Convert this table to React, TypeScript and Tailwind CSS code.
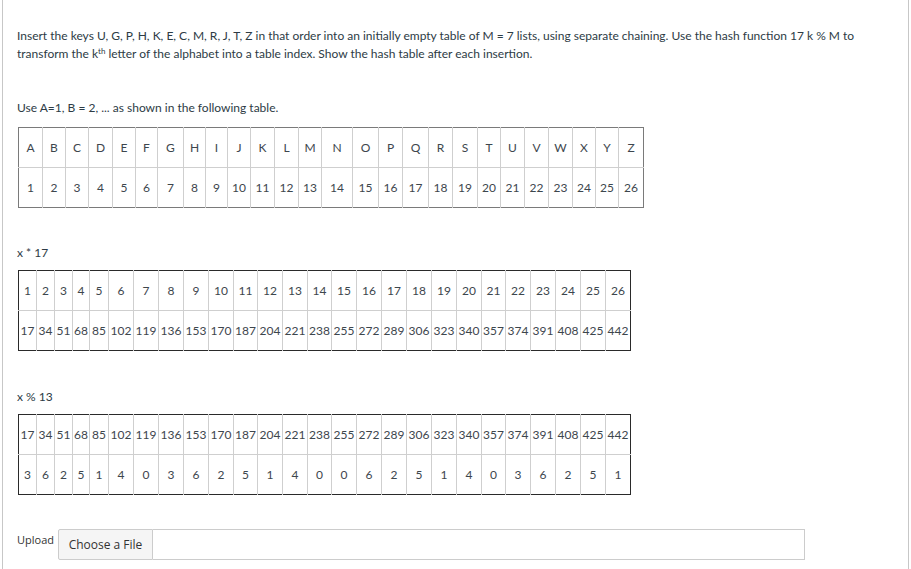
import React from "react";

const letters = "ABCDEFGHIJKLMNOPQRSTUVWXYZ".split("");
const nums = letters.map((_, i) => i + 1);
const times17 = nums.map((n) => n * 17);
// values as given in the assignment
const mod = [3, 6, 2, 5, 1, 4, 0, 3, 6, 2, 5, 1, 4, 0, 0, 6, 2, 5, 1, 4, 0, 3, 6, 2, 5, 1];

// measured column widths from the reference
const alphaCols = [
  "w-[24px]", "w-[23px]", "w-[23px]", "w-[24px]", "w-[23px]", "w-[22px]",
  "w-[26px]", "w-[22px]", "w-[22px]", "w-[23px]", "w-[24px]", "w-[24px]",
  "w-[23px]", "w-[31px]", "w-[26px]", "w-[24px]", "w-[26px]", "w-[24px]",
  "w-[25px]", "w-[23px]", "w-[24px]", "w-[24px]", "w-[24px]", "w-[23px]",
  "w-[23px]", "w-[25px]",
];

const numCols = [
  "w-[18px]", "w-[18px]", "w-[18px]", "w-[17px]", "w-[19px]", "w-[25px]",
  "w-[25px]", "w-[25px]", "w-[25px]", "w-[25px]", "w-[24px]", "w-[25px]",
  "w-[25px]", "w-[24px]", "w-[25px]", "w-[25px]", "w-[25px]", "w-[25px]",
  "w-[25px]", "w-[25px]", "w-[24px]", "w-[25px]", "w-[25px]", "w-[25px]",
  "w-[25px]", "w-[25px]",
];

const Label = ({ children }: { children: React.ReactNode }) => (
  <p className="text-[12px] leading-[18px]">{children}</p>
);

// ✅ Table of two rows with fixed column widths
const ValueTable = ({
  rows,
  cols,
  outer,
  splitAt,
}: {
  rows: (string | number)[][];
  cols: string[];
  outer: string;
  splitAt?: number;
}) => (
  <table className={`table-fixed border-collapse border ${outer}`}>
    <colgroup>
      {cols.map((c, i) => (
        <col key={i} className={c} />
      ))}
    </colgroup>
    <tbody>
      {rows.map((row, r) => (
        <tr key={r} className="h-[40px]">
          {row.map((cell, i) => (
            <td
              key={i}
              className={`p-0 text-center align-middle text-[12px] text-[#3d464d] border border-[#cfcfcf] ${
                i === splitAt ? "border-l-[#111]" : ""
              } ${r === 0 ? `border-t-0` : "border-b-0"} ${
                i === 0 ? "border-l-0" : ""
              } ${i === row.length - 1 ? "border-r-0" : ""}`}
            >
              {cell}
            </td>
          ))}
        </tr>
      ))}
    </tbody>
  </table>
);

export default function App() {
  return (
    <div
      className="ml-[2px] w-[907px] h-[569px] border-x border-[#c7c7c7] pl-[14px] pt-[27px] text-[#2d3b45] bg-white overflow-hidden"
      style={{ fontFamily: "Lato, 'Liberation Sans', sans-serif" }}
    >
      <p className="text-[12px] leading-[18px] pr-[40px]">
        Insert the keys U, G, P, H, K, E, C, M, R, J, T, Z in that order into
        an initially empty table of M = 7 lists, using separate chaining. Use
        the hash function 17 k % M to transform the k
        <span className="relative -top-[4px] text-[8px] leading-none">th</span>{" "}
        letter of the alphabet into a table index. Show the hash table after
        each insertion.
      </p>

      <div className="mt-[36px]">
        <Label>Use A=1, B = 2, ... as shown in the following table.</Label>
      </div>

      <div className="mt-[10px] ml-[1px]">
        <ValueTable
          rows={[letters, nums]}
          cols={alphaCols}
          outer="border-[#7a7a7a]"
          splitAt={17}
        />
      </div>

      <div className="mt-[36px]">
        <Label>x * 17</Label>
      </div>
      <div className="mt-[8px] ml-[1px]">
        <ValueTable
          rows={[nums, times17]}
          cols={numCols}
          outer="border-[#2a2a2a]"
        />
      </div>

      <div className="mt-[37px]">
        <Label>x % 13</Label>
      </div>
      <div className="mt-[8px] ml-[1px]">
        <ValueTable
          rows={[times17, mod]}
          cols={numCols}
          outer="border-[#2a2a2a]"
        />
      </div>

      {/* Upload */}
      <div
        className="mt-[34px] flex items-start"
        style={{ fontFamily: "'Open Sans', 'Liberation Sans', sans-serif" }}
      >
        <span className="text-[11px] leading-[22px] text-[#333] w-[41px]">
          Upload
        </span>
        <div className="flex h-[31px]">
          <div className="w-[95px] flex items-center justify-center bg-[#f5f5f5] border border-[#cccccc] text-[12px] text-[#333] rounded-l-[2px]">
            Choose a File
          </div>
          <div className="w-[652px] border border-l-0 border-[#cccccc] bg-white" />
        </div>
      </div>
    </div>
  );
}
